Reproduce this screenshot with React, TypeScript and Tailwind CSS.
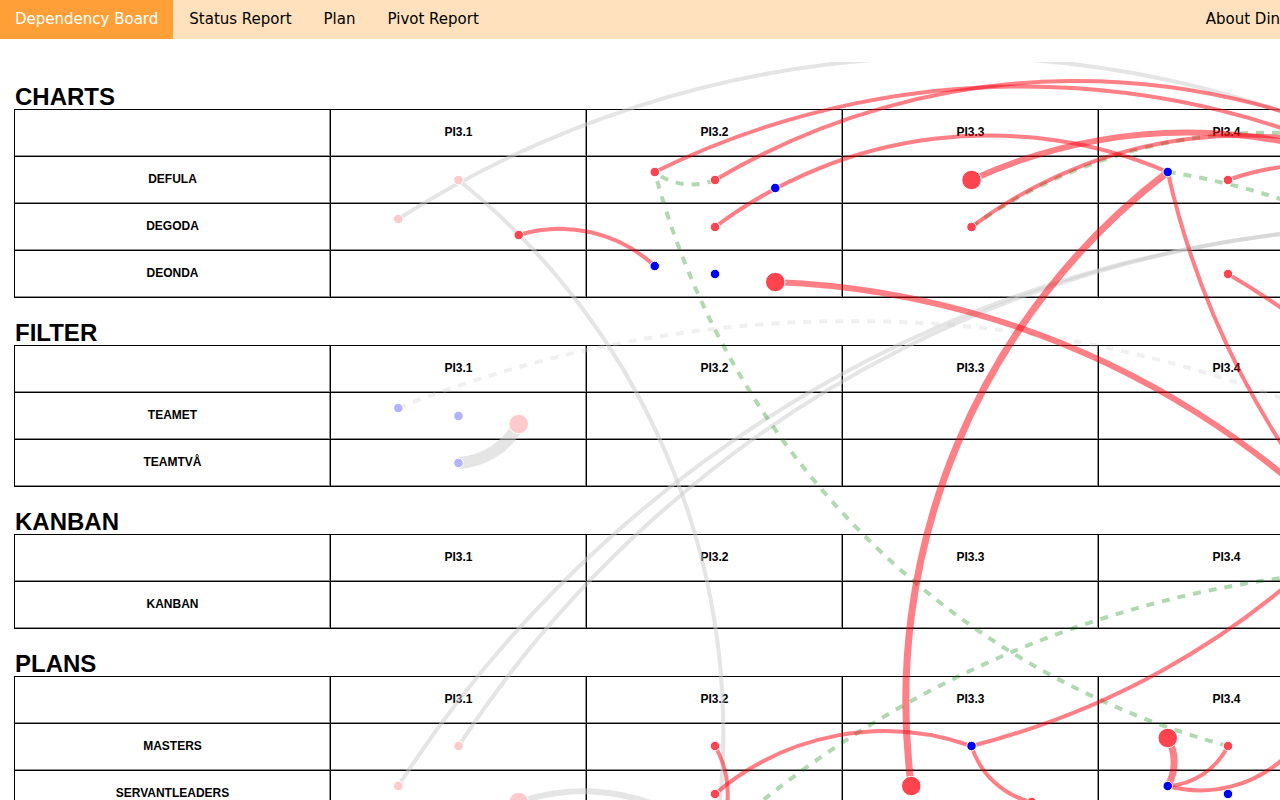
import React from 'react';
import clsx from 'clsx';

type Slot = -1 | 0 | 1;
type Point = [number, number];
type NodeTone = 'red' | 'blue' | 'fadedRed' | 'fadedBlue';
type LinkTone = 'conflict' | 'ok' | 'done' | 'doneDashed';

interface BoardNode {
  at: Point;
  tone: NodeTone;
  big?: boolean;
}

interface BoardLink {
  from: Point;
  to: Point;
  tone: LinkTone;
  width?: number;
}

const navItems = [
  { label: 'Dependency Board', href: '#board', active: true },
  { label: 'Status Report', href: '#status' },
  { label: 'Plan', href: '#plan' },
  { label: 'Pivot Report', href: '#pivot' },
];

const increments = ['PI3.1', 'PI3.2', 'PI3.3', 'PI3.4'];

const groups = [
  { name: 'CHARTS', teams: ['DEFULA', 'DEGODA', 'DEONDA'] },
  { name: 'FILTER', teams: ['TEAMET', 'TEAMTVÅ'] },
  { name: 'KANBAN', teams: ['KANBAN'] },
  { name: 'PLANS', teams: ['MASTERS', 'SERVANTLEADERS'] },
];

// Vertical centre of every row that has nodes, measured from the top of the board
const rowY = {
  defula: 118,
  degoda: 165,
  deonda: 212,
  teamet: 354,
  teamtva: 401,
  masters: 684,
  servants: 732,
  below: 779,
};

// Each cell has three slots, running diagonally from top left to bottom right
const at = (pi: number, row: keyof typeof rowY, slot: Slot = 0): Point => [
  458.5 + (pi - 1) * 256.5 + slot * 60.25,
  rowY[row] + slot * 8,
];

const links: BoardLink[] = [
  { from: at(1, 'degoda', -1), to: at(5, 'defula', -1), tone: 'done' },
  { from: at(1, 'defula'), to: at(2, 'below'), tone: 'done' },
  { from: at(1, 'servants', -1), to: at(5, 'degoda'), tone: 'done' },
  { from: at(1, 'masters'), to: at(5, 'degoda'), tone: 'done' },
  { from: at(1, 'teamet', 1), to: at(1, 'teamtva'), tone: 'done', width: 12 },
  { from: at(1, 'servants', 1), to: at(2, 'below'), tone: 'done', width: 6 },
  { from: at(1, 'teamet', -1), to: [1615, 524], tone: 'doneDashed' },

  { from: at(2, 'defula'), to: at(2, 'defula', -1), tone: 'ok' },
  { from: at(4, 'masters'), to: at(2, 'defula', -1), tone: 'ok' },
  { from: at(3, 'degoda'), to: at(5, 'defula'), tone: 'ok' },
  { from: at(4, 'defula', -1), to: [1714, 548], tone: 'ok' },
  { from: at(2, 'below'), to: [1752, 558], tone: 'ok' },

  { from: at(1, 'degoda', 1), to: at(2, 'deonda', -1), tone: 'conflict' },
  { from: at(2, 'defula', -1), to: at(5, 'degoda'), tone: 'conflict' },
  { from: at(2, 'defula'), to: at(5, 'defula', -1), tone: 'conflict' },
  { from: at(2, 'degoda'), to: at(4, 'defula', -1), tone: 'conflict' },
  { from: at(3, 'defula'), to: at(5, 'degoda'), tone: 'conflict', width: 6 },
  { from: at(3, 'degoda'), to: at(5, 'defula', -1), tone: 'conflict' },
  { from: at(4, 'defula'), to: at(5, 'degoda'), tone: 'conflict' },
  { from: at(4, 'deonda'), to: [1578, 818], tone: 'conflict' },
  { from: at(2, 'deonda', 1), to: [1496, 674], tone: 'conflict', width: 6 },
  { from: at(3, 'servants', -1), to: at(4, 'defula', -1), tone: 'conflict', width: 7 },
  { from: at(6, 'servants'), to: at(4, 'defula', -1), tone: 'conflict' },
  { from: at(2, 'servants'), to: at(3, 'masters'), tone: 'conflict' },
  { from: at(2, 'masters'), to: at(2, 'below'), tone: 'conflict' },
  { from: at(3, 'servants', 1), to: at(3, 'masters'), tone: 'conflict' },
  { from: at(5, 'defula', 1), to: at(3, 'masters'), tone: 'conflict' },
  { from: at(4, 'masters', -1), to: at(4, 'servants', -1), tone: 'conflict', width: 7 },
  { from: at(4, 'masters'), to: at(4, 'servants', -1), tone: 'conflict' },
  { from: at(4, 'masters', 1), to: at(4, 'servants', -1), tone: 'conflict' },
];

const nodes: BoardNode[] = [
  { at: at(1, 'degoda', -1), tone: 'fadedRed' },
  { at: at(1, 'defula'), tone: 'fadedRed' },
  { at: at(1, 'degoda', 1), tone: 'red' },
  { at: at(2, 'defula', -1), tone: 'red' },
  { at: at(2, 'defula'), tone: 'red' },
  { at: at(2, 'defula', 1), tone: 'blue' },
  { at: at(2, 'degoda'), tone: 'red' },
  { at: at(2, 'deonda', -1), tone: 'blue' },
  { at: at(2, 'deonda'), tone: 'blue' },
  { at: at(2, 'deonda', 1), tone: 'red', big: true },
  { at: at(3, 'defula'), tone: 'red', big: true },
  { at: at(3, 'degoda'), tone: 'red' },
  { at: at(4, 'defula', -1), tone: 'blue' },
  { at: at(4, 'defula'), tone: 'red' },
  { at: at(4, 'deonda'), tone: 'red' },
  { at: at(1, 'teamet', -1), tone: 'fadedBlue' },
  { at: at(1, 'teamet'), tone: 'fadedBlue' },
  { at: at(1, 'teamet', 1), tone: 'fadedRed', big: true },
  { at: at(1, 'teamtva'), tone: 'fadedBlue' },
  { at: at(1, 'masters'), tone: 'fadedRed' },
  { at: at(1, 'servants', -1), tone: 'fadedRed' },
  { at: at(1, 'servants', 1), tone: 'fadedRed', big: true },
  { at: at(2, 'masters'), tone: 'red' },
  { at: at(2, 'servants'), tone: 'red' },
  { at: at(3, 'masters'), tone: 'blue' },
  { at: at(3, 'servants', -1), tone: 'red', big: true },
  { at: at(3, 'servants', 1), tone: 'red' },
  { at: at(4, 'masters', -1), tone: 'red', big: true },
  { at: at(4, 'masters'), tone: 'red' },
  { at: at(4, 'masters', 1), tone: 'red' },
  { at: at(4, 'servants', -1), tone: 'blue' },
  { at: at(4, 'servants'), tone: 'blue' },
];

const nodeClass: Record<NodeTone, string> = {
  red: 'fill-[#ff444f]',
  blue: 'fill-[#0000ff]',
  fadedRed: 'fill-[#ffcacc]',
  fadedBlue: 'fill-[#b3b3ff]',
};

const linkClass: Record<LinkTone, string> = {
  conflict: 'stroke-[#ff000f]/50',
  ok: 'stroke-[#008000]/30',
  done: 'stroke-[#cccccc]/50',
  doneDashed: 'stroke-[#cccccc]/30',
};

// The radius equals the distance, so every arc spans 60 degrees
const arc = ([x1, y1]: Point, [x2, y2]: Point) => {
  const r = Math.hypot(x2 - x1, y2 - y1);
  return `M${x1},${y1}A${r},${r} 0 0,1 ${x2},${y2}`;
};

const NavBar: React.FC = () => (
  <nav className="flex h-[39px] w-full bg-[#ffe1be] font-['DejaVu_Sans',sans-serif] text-[15px] text-black">
    {navItems.map((item) => (
      <a
        key={item.label}
        href={item.href}
        className={clsx(
          'flex items-center whitespace-nowrap',
          item.active ? 'bg-[#ff9f38] px-[15px] text-white' : 'px-4'
        )}
      >
        {item.label}
      </a>
    ))}
    <a href="#about" className="-mr-11 ml-auto flex items-center whitespace-nowrap pr-4">
      About Dinghy
    </a>
  </nav>
);

const cellClass = 'border-b border-r border-black p-0 pb-0.5 text-center shadow-[inset_-1px_-1px_0_#8c8c8c]';

const GroupTable: React.FC<{ name: string; teams: string[] }> = ({ name, teams }) => (
  <section className="pt-[23px]">
    <h2 className="text-2xl/6 font-bold">{name}</h2>
    <table
      aria-label={name}
      className="-ml-px table-fixed border-separate border-spacing-0 border-l border-t border-black text-xs font-bold"
    >
      <thead>
        <tr>
          <td className={clsx('h-[47px] w-[316px]', cellClass)} />
          {increments.map((pi) => (
            <th key={pi} scope="col" className={clsx('h-[47px] w-64', cellClass)}>
              {pi}
            </th>
          ))}
        </tr>
      </thead>
      <tbody>
        {teams.map((team) => (
          <tr key={team}>
            <th scope="row" className={clsx('h-[47px]', cellClass)}>
              {team}
            </th>
            {increments.map((pi) => (
              <td key={pi} className={cellClass} />
            ))}
          </tr>
        ))}
      </tbody>
    </table>
  </section>
);

const DependencyGraph: React.FC = () => (
  <svg className="absolute left-0 top-0 h-full w-full overflow-hidden" fill="none" aria-hidden="true">
    {links.map((link, index) => (
      <path
        key={index}
        d={arc(link.from, link.to)}
        className={linkClass[link.tone]}
        strokeWidth={link.width ?? 4}
        strokeDasharray={link.tone === 'ok' || link.tone === 'doneDashed' ? '8 8' : undefined}
      />
    ))}
    {nodes.map((node, index) => (
      <circle
        key={index}
        cx={node.at[0]}
        cy={node.at[1]}
        r={node.big ? 9.75 : 4.75}
        className={clsx('stroke-white', nodeClass[node.tone])}
      />
    ))}
  </svg>
);

const App: React.FC = () => {
  return (
    <div className="flex h-screen flex-col overflow-hidden bg-white text-black">
      <NavBar />
      <main className="mt-[23px] min-h-0 flex-1 overflow-hidden font-['Liberation_Sans',Arial,sans-serif]">
        {/* The board is wider than the window */}
        <div className="relative w-max pl-[15px]">
          {groups.map((group) => (
            <GroupTable key={group.name} name={group.name} teams={group.teams} />
          ))}
          <DependencyGraph />
        </div>
      </main>
    </div>
  );
};

export default App;
